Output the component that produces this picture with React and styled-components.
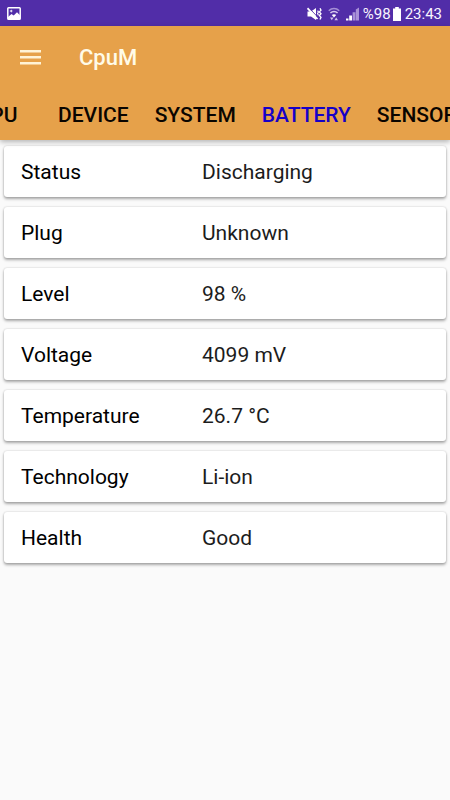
import React, { useLayoutEffect, useRef, useState } from "react";
import styled, { createGlobalStyle } from "styled-components";

const GlobalStyle = createGlobalStyle`
  *, *::before, *::after { box-sizing: border-box; }
  body {
    margin: 0;
    background: #fafafa;
    color: #000;
    font-family: Roboto, "Liberation Sans", sans-serif;
  }
  button { font: inherit; border: 0; background: none; padding: 0; cursor: pointer; }
`;

const Page = styled.div`
  min-height: 100vh;
  display: flex;
  flex-direction: column;
`;

const StatusBar = styled.div`
  height: 26px;
  padding: 1px 8px 0 7px;
  display: flex;
  align-items: center;
  justify-content: space-between;
  background: #512da8;
  color: #f8f4ff;
  font-size: 15px;
  line-height: 24px;
`;

const StatusGroup = styled.div`
  display: flex;
  align-items: center;
  gap: ${(p) => p.$gap}px;
`;

const Header = styled.header`
  position: relative;
  background: #e6a14a;
  box-shadow: 0 2px 5px rgba(0, 0, 0, 0.28);
`;

const Toolbar = styled.div`
  height: 62px;
  padding: 2px 20px 0;
  display: flex;
  align-items: center;
  gap: 37px;
`;

const MenuButton = styled.button`
  display: flex;
  width: 22px;
  height: 32px;
  align-items: center;
  justify-content: center;
  color: #fff3d6;
`;

const Title = styled.h1`
  margin: 0;
  color: #fffbe8;
  font-size: 22px;
  line-height: 32px;
  font-weight: 500;
`;

const TabBar = styled.nav`
  display: flex;
  height: 52px;
  overflow-x: auto;
  scrollbar-width: none;
  &::-webkit-scrollbar { display: none; }
`;

const Tab = styled.button`
  && {
    flex: none;
    min-width: 96px;
    padding: 2px 13px 0;
    color: ${(p) => (p.$active ? "#1400c8" : "#0a0500")};
    font-size: 21px;
    line-height: 50px;
    font-weight: 500;
  }
`;

const List = styled.dl`
  margin: 0;
  padding: 6px 4px;
  display: flex;
  flex-direction: column;
  gap: 10px;
`;

const Card = styled.div`
  min-height: 51px;
  padding: 0 17px;
  display: grid;
  grid-template-columns: 181px 1fr;
  align-items: center;
  background: #fff;
  border-radius: 3px;
  box-shadow: 0 2px 3px rgba(0, 0, 0, 0.32), 0 0 2px rgba(0, 0, 0, 0.2);
  font-size: 21px;
  line-height: 28px;
`;

const Label = styled.dt`
  color: #000;
`;

const Value = styled.dd`
  margin: 0;
  color: #1c1c1c;
`;

const TABS = ["CPU", "DEVICE", "SYSTEM", "BATTERY", "SENSORS"];
const INITIAL_SCROLL = 51;

const ROWS = [
  ["Status", "Discharging"],
  ["Plug", "Unknown"],
  ["Level", "98 %"],
  ["Voltage", "4099 mV"],
  ["Temperature", "26.7 °C"],
  ["Technology", "Li-ion"],
  ["Health", "Good"],
];

const PictureIcon = () => (
  <svg width="14" height="13" viewBox="0 0 14 13" aria-hidden="true">
    <rect x="0.8" y="0.8" width="12.4" height="11.4" rx="0.8" fill="none" stroke="#fff" strokeWidth="1.5" />
    <path d="M1 10l3.5-3 2.2 1.6L10 5.2l3 3V12H1z" fill="#fff" />
    <path d="M4.2 2.4l.6 1.1 1.2.5-1.2.6-.6 1.1-.6-1.1L2.4 4l1.2-.5z" fill="#fff" />
  </svg>
);

const MuteIcon = () => (
  <svg width="15" height="14" viewBox="0 0 15 14" fill="none" aria-hidden="true">
    <path d="M0.5 4.5H4L9 1v12L4 9.5H0.5z" fill="#fff" />
    <path d="M2 1l8 8.4" stroke="#512da8" strokeWidth="1" />
    <path d="M0.5 1.2l10 10.8" stroke="#fff" strokeWidth="1.7" />
    <path d="M13 1.2l1 1.9-1.6 1.8 1.6 1.8-1.6 1.8 1.6 1.8-1 2.2" stroke="#fff" strokeWidth="1.3" />
    <path d="M10.6 3.6l.8 1.4-.8 1.6.8 1.6" stroke="#fff" strokeWidth="1.2" />
  </svg>
);

const WifiIcon = () => (
  <svg width="12" height="14" viewBox="0 0 12 14" fill="none" aria-hidden="true">
    <path d="M0.8 3.8C3.8 0.8 8.2 0.8 11.2 3.8" stroke="#a48fd5" strokeWidth="1.6" />
    <path d="M2.4 6c2.1-2 5.1-2 7.2 0" stroke="#d5c8ee" strokeWidth="1.6" />
    <path d="M3.8 8.1c1.2-1 3.2-1 4.4 0L6 10.4z" fill="#fff" />
    <path d="M2 10.5h3.6L3.8 13.2zM6.4 13.2H10l-1.8-2.7z" fill="#cfc0ea" />
  </svg>
);

const SignalIcon = () => (
  <svg width="13" height="14" viewBox="0 0 13 14" aria-hidden="true">
    <path d="M0 13.5v-2h2.5v2zM3.2 13.5V8.5H6v5z" fill="#fff" />
    <path d="M6.6 13.5V5.2h2.8v8.3zM9.8 13.5V2.6L13 0.5v13z" fill="#a991d8" />
  </svg>
);

const BatteryIcon = () => (
  <svg width="8" height="14" viewBox="0 0 8 14" fill="#fff" aria-hidden="true">
    <path d="M2.2 0h3.6v1.5H8V14H0V1.5h2.2z" />
  </svg>
);

const MenuIcon = () => (
  <svg width="22" height="16" viewBox="0 0 22 16" fill="currentColor" aria-hidden="true">
    <path d="M0 0h21v2.4H0zM0 6h21v2.4H0zM0 12h21v2.4H0z" />
  </svg>
);

export default function App() {
  const [active, setActive] = useState("BATTERY");
  const tabBar = useRef(null);

  useLayoutEffect(() => {
    tabBar.current.scrollLeft = INITIAL_SCROLL;
  }, []);

  return (
    <Page>
      <GlobalStyle />
      <StatusBar>
        <PictureIcon />
        <StatusGroup $gap={4}>
          <StatusGroup $gap={6}>
            <MuteIcon />
            <WifiIcon />
            <SignalIcon />
          </StatusGroup>
          <StatusGroup $gap={2}>
            <span>%98</span>
            <BatteryIcon />
          </StatusGroup>
          <span>23:43</span>
        </StatusGroup>
      </StatusBar>
      <Header>
        <Toolbar>
          <MenuButton type="button" aria-label="Open menu">
            <MenuIcon />
          </MenuButton>
          <Title>CpuM</Title>
        </Toolbar>
        <TabBar ref={tabBar} aria-label="Sections">
          {TABS.map((name) => (
            <Tab
              key={name}
              type="button"
              $active={name === active}
              aria-current={name === active ? "page" : undefined}
              onClick={() => setActive(name)}
            >
              {name}
            </Tab>
          ))}
        </TabBar>
      </Header>
      <main>
        <List>
          {ROWS.map(([label, value]) => (
            <Card key={label}>
              <Label>{label}</Label>
              <Value>{value}</Value>
            </Card>
          ))}
        </List>
      </main>
    </Page>
  );
}
